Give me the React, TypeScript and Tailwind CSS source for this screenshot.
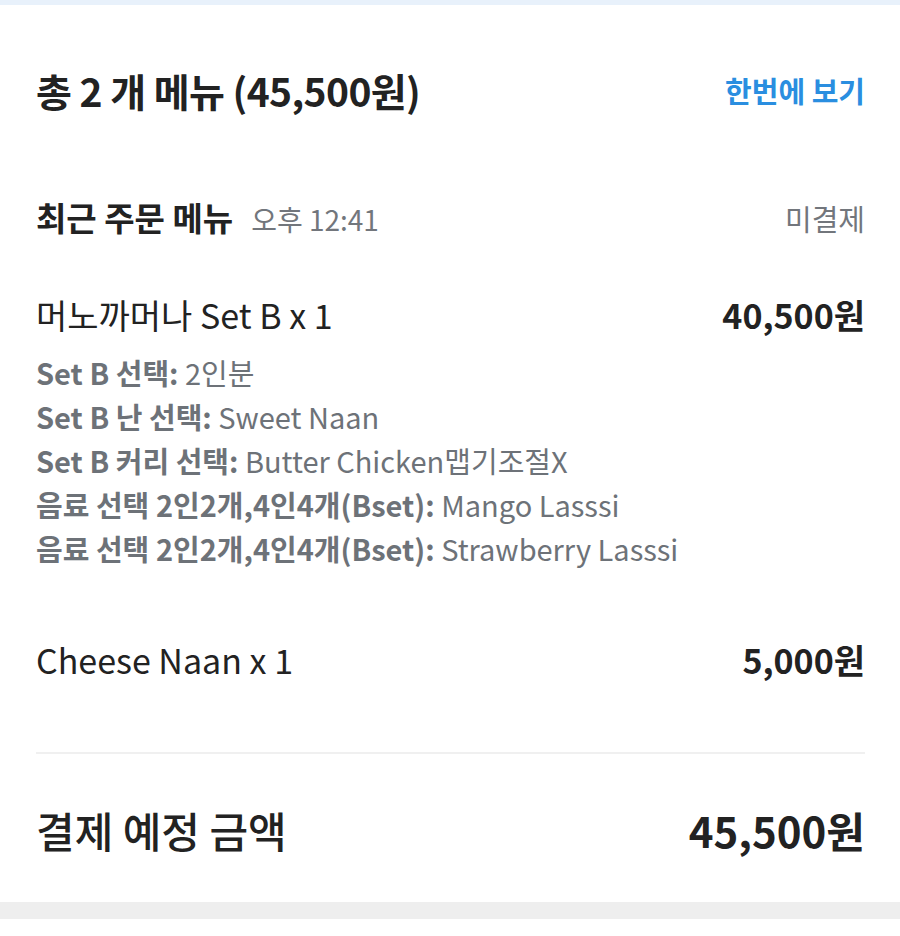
const options = [
  { label: "Set B 선택:", value: "2인분" },
  { label: "Set B 난 선택:", value: "Sweet Naan" },
  { label: "Set B 커리 선택:", value: "Butter Chicken맵기조절X" },
  { label: "음료 선택 2인2개,4인4개(Bset):", value: "Mango Lasssi" },
  { label: "음료 선택 2인2개,4인4개(Bset):", value: "Strawberry Lasssi" },
];

export default function App() {
  return (
    <div
      className="min-h-[936px] w-[900px] bg-white text-[#222222]"
      style={{ fontFamily: '"Noto Sans CJK KR", "Noto Sans", sans-serif' }}
    >
      <div className="h-[5px] bg-[#e8f1fb]" />
      <div className="pl-[36px] pr-[35px]">
        <div className="flex items-center justify-between pt-[63px]">
          <h2 className="text-[39px] font-bold leading-[44px] tracking-[-0.6px]">
            총 2 개 메뉴 (45,500원)
          </h2>
          <button className="text-[29px] font-bold leading-[36px] text-[#2a8ee0]">
            한번에 보기
          </button>
        </div>

        <div className="mt-[87px] flex items-center justify-between">
          <div className="flex items-baseline gap-[18px]">
            <span className="text-[33px] font-bold leading-[36px]">최근 주문 메뉴</span>
            <span className="text-[28px] leading-[36px] text-[#72767c]">오후 12:41</span>
          </div>
          <span className="text-[29px] leading-[36px] text-[#72767c]">미결제</span>
        </div>

        <div className="mt-[58px] flex items-center justify-between">
          <span className="text-[34px] leading-[40px]">머노까머나 Set B x 1</span>
          <span className="text-[34px] font-bold leading-[40px]">40,500원</span>
        </div>
        <ul className="mt-[15px] flex flex-col">
          {options.map((o, i) => (
            <li key={i} className="text-[29px] leading-[44px] text-[#6d7278]">
              <span className="font-semibold">{o.label}</span> {o.value}
            </li>
          ))}
        </ul>

        <div className="mt-[70px] flex items-center justify-between">
          <span className="text-[34px] leading-[40px]">Cheese Naan x 1</span>
          <span className="text-[34px] font-bold leading-[40px]">5,000원</span>
        </div>

        <div className="mt-[72px] h-[2px] bg-[#f0f0f0]" />

        <div className="mt-[51px] flex items-center justify-between">
          <span className="text-[42px] font-medium leading-[50px]">결제 예정 금액</span>
          <span className="text-[42px] font-bold leading-[50px]">45,500원</span>
        </div>
      </div>
      <div className="mt-[47px] h-[17px] bg-[#eeeeee]" />
    </div>
  );
}
